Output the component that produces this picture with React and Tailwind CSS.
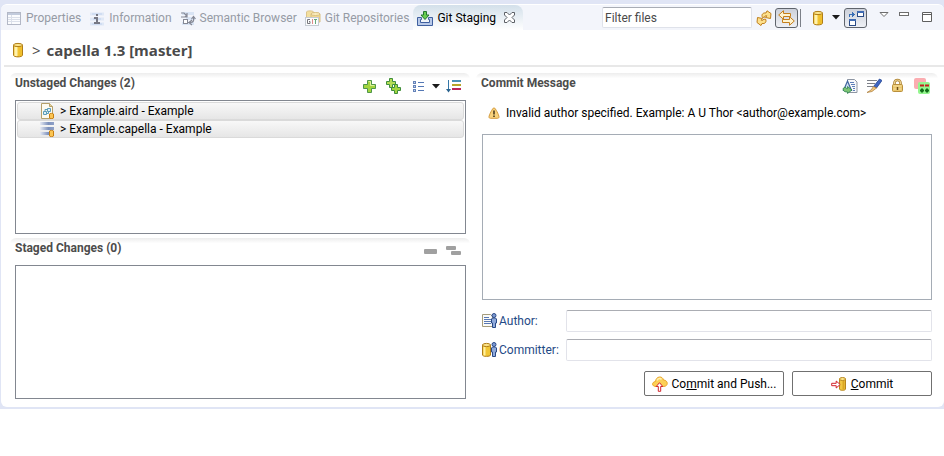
import React from "react";

const svgProps = { width: 16, height: 16, viewBox: "0 0 16 16", "aria-hidden": true, className: "block shrink-0" };

function PropertiesIcon() {
  return (
    <svg {...svgProps} shapeRendering="crispEdges">
      <rect x="1.5" y="2.5" width="13" height="12" fill="#fbfcfe" stroke="#b3b8c6" />
      <rect x="2" y="3" width="12" height="2" fill="#c2cbdc" />
      <path d="M2 7.5h12M2 9.5h12M2 11.5h12M5.5 5v9" stroke="#dbe0ea" fill="none" />
    </svg>
  );
}

function InformationIcon() {
  return (
    <svg {...svgProps}>
      <path d="M1 4h14M1 9h14M1 14h14" stroke="#dfe8f6" strokeWidth="3" />
      <path d="M3 4h10M4 9h8M3 14h10" stroke="#d0ddf2" strokeWidth="2" />
      <path d="M7 4h2v2H7zM5 7h4v5h2v2H5v-2h2V9H5z" fill="#777985" />
    </svg>
  );
}

function SemanticIcon() {
  return (
    <svg {...svgProps}>
      <path d="M2 3.500h12M6 8.500h9M2 13.500h12" stroke="#d9e4f4" strokeWidth="3" />
      <path d="M1 3h3l3 3M1 7h4l2-2M7 3v4H3" stroke="#868995" strokeWidth="1.200" fill="none" />
      <rect x="3.500" y="9.500" width="4" height="4" fill="#fff" stroke="#868995" />
      <path d="M8 12.500h2.500c3 0 3.500-2 3-5M11.500 9l2-2.500L15.500 9M12 10l-3 2.500 3 2.500" stroke="#868995" strokeWidth="1.200" fill="none" />
    </svg>
  );
}

function GitRepositoriesIcon() {
  return (
    <svg {...svgProps}>
      <path d="M1.500 2c0-1.500 7-1.500 7 0v7h-7z" fill="#f3df9f" stroke="#dcc48a" />
      <path d="M6 4c0-1.500 9-1.500 9 0v8H6z" fill="#f1d88c" stroke="#d9c083" />
      <ellipse cx="10.500" cy="4" rx="4.500" ry="1.500" fill="#faedbd" stroke="#d9c083" />
      <rect x=".5" y="7.500" width="13" height="8" fill="#fbfcfd" stroke="#c5cbd3" />
      <path d="M5 9.500H2.500v4H5v-2H4" stroke="#77777d" fill="none" />
      <path d="M7.500 9v5" stroke="#e08a8a" />
      <path d="M9 9.500h3M10.500 10v4" stroke="#65a97a" fill="none" />
    </svg>
  );
}

function GitStagingIcon() {
  return (
    <svg {...svgProps}>
      <path d="M.5 7.500h4v2h-1v3h9v-3h-1v-2h4v8H.5z" fill="#b8c9e8" stroke="#3f5f9f" />
      <path d="M6.500 1.500h3V5H12L8 9.500 4 5h2.500z" fill="#66cc4f" stroke="#23762f" />
    </svg>
  );
}

function CloseIcon() {
  return (
    <svg width="11" height="11" viewBox="0 0 11 11" aria-hidden="true" className="block">
      <path d="M.5.5h2.500l2.500 2.500L8 .5h2.500V3L8 5.500 10.500 8v2.500H8L5.500 8 3 10.500H.5V8L3 5.500.5 3z" fill="#fff" stroke="#5d6066" />
    </svg>
  );
}

function RefreshIcon() {
  return (
    <svg {...svgProps}>
      <path d="M6.500 7.500C5 4.500 7 2.500 10 3l1-2.200L15 3.500l-.5 5-5-1 1.300-1.700C9.500 5.200 8.800 6 9 7z" fill="#fde08c" stroke="#c07f1b" />
      <path d="M9.500 9c1.500 3-.5 5-3.500 4.500l-1 2L1 12.500l.5-5 5 1-1.300 1.700C6.500 10.800 7.200 10.500 7 9.500z" fill="#fde08c" stroke="#c07f1b" />
    </svg>
  );
}

function LinkSelectionIcon() {
  return (
    <svg width="17" height="16" viewBox="0 0 17 16" aria-hidden="true" className="block shrink-0">
      <path d="M.7 5 5.500.7v2.800h7v3h-7v2.800z" fill="#fff3cf" stroke="#c57f1c" />
      <path d="m16.300 11-4.800-4.300v2.800h-7v3h7v2.800z" fill="#fff3cf" stroke="#c57f1c" />
    </svg>
  );
}

function DatabaseIcon() {
  return (
    <svg {...svgProps}>
      <path d="M3.500 3v10c0 2.500 9 2.500 9 0V3z" fill="#f2c431" stroke="#b07d17" />
      <path d="M6 5v9" stroke="#fff2ae" strokeWidth="3" />
      <path d="M10.500 5v9" stroke="#efbd2b" strokeWidth="2" />
      <ellipse cx="8" cy="3" rx="4.500" ry="1.600" fill="#fce58a" stroke="#b07d17" />
    </svg>
  );
}

function HierarchyIcon() {
  return (
    <svg {...svgProps} shapeRendering="crispEdges">
      <path d="M1.500 7V4.500H5" stroke="#3a6fb5" fill="none" />
      <path d="M4 2h1v1h1v1h1v1H6v1H5v1H4z" fill="#3a6fb5" />
      <rect x="9.500" y="1.500" width="6" height="5" fill="#fff" stroke="#2b4b85" />
      <path d="M9 2h7" stroke="#3f6bb3" strokeWidth="2" />
      <rect x="1.500" y="9.500" width="6" height="6" fill="#fff" stroke="#2b4b85" />
      <path d="M1 10h7" stroke="#3f6bb3" strokeWidth="2" />
    </svg>
  );
}

function DropArrow() {
  return (
    <svg width="8" height="5" viewBox="0 0 8 5" aria-hidden="true" className="block shrink-0">
      <path d="M0 0h8L4 4.500z" fill="#1a1a1a" />
    </svg>
  );
}

function ViewMenuIcon() {
  return (
    <svg width="10" height="6" viewBox="0 0 10 6" aria-hidden="true" className="block">
      <path d="M1 .5h8l-4 4z" fill="#fff" stroke="#6d6d6d" />
    </svg>
  );
}

function MinimizeIcon() {
  return (
    <svg width="10" height="4" viewBox="0 0 10 4" aria-hidden="true" className="block">
      <rect x=".5" y=".5" width="9" height="3" fill="#fff" stroke="#6d6d6d" />
    </svg>
  );
}

function MaximizeIcon() {
  return (
    <svg width="10" height="10" viewBox="0 0 10 10" aria-hidden="true" className="block">
      <path d="M.5.5h9v9h-9zM.5 2.500h9" fill="#fff" stroke="#5f5f5f" />
    </svg>
  );
}

function PlusIcon() {
  return (
    <svg {...svgProps}>
      <path d="M5.500 2.500h4v4h4v4h-4v4h-4v-4h-4v-4h4z" fill="#a3d53f" stroke="#4f964a" />
      <path d="M6.500 3.500h2v4h4" stroke="#dff09a" fill="none" />
    </svg>
  );
}

function DoublePlusIcon() {
  return (
    <svg {...svgProps}>
      <path d="M4.500.5h3v3h3v3h-3v3h-3v-3h-3v-3h3z" fill="#b5dd55" stroke="#3f8e3c" />
      <path d="M9.500 6.500h3v3h3v3h-3v3h-3v-3h-3v-3h3z" fill="#a3d53f" stroke="#3f8e3c" />
    </svg>
  );
}

function PresentationIcon() {
  return (
    <svg {...svgProps} shapeRendering="crispEdges">
      <path d="M2.500 3.500h2v2h-2zM2.500 7.500h2v2h-2zM2.500 11.500h2v2h-2z" fill="#c5d5f0" stroke="#6683b8" />
      <path d="M7 4.500h6M7 8.500h6M7 12.500h6" stroke="#5478b5" />
    </svg>
  );
}

function SortIcon() {
  return (
    <svg {...svgProps}>
      <path d="M2.500 2v10" stroke="#3577a8" />
      <path d="M0 11h5l-2.500 3.500z" fill="#2c648f" />
      <path d="M6 3h9" stroke="#4b91b5" strokeWidth="2" />
      <path d="M6 7h9" stroke="#b8a528" strokeWidth="2" />
      <path d="M6 11h9" stroke="#ba2658" strokeWidth="2" />
    </svg>
  );
}

function MinusIcon() {
  return (
    <svg {...svgProps}>
      <rect x="1" y="6" width="13" height="5" rx="1" fill="#a0a0a0" />
    </svg>
  );
}

function DoubleMinusIcon() {
  return (
    <svg {...svgProps}>
      <rect x="0" y="3" width="10" height="4" rx="1" fill="#a0a0a0" />
      <rect x="5" y="8" width="10" height="4" rx="1" fill="#a0a0a0" />
    </svg>
  );
}

function AirdIcon() {
  return (
    <svg {...svgProps}>
      <path d="M1.500.5h8l3 3v12h-11z" fill="#fdfaf0" stroke="#b5a06a" />
      <path d="M9.500.5v3h3" fill="#e5d39c" stroke="#b5a06a" />
      <path d="M3.500 8.500h3v3h-3zM7.500 5.500h3v3h-3zM5 8V6.500h2M6.500 10.500h2v-2" fill="#dceff6" stroke="#5b9cb8" />
      <path d="M9.500 11v4c0 .8 4 .8 4 0v-4c0-.8-4-.8-4 0z" fill="#fbc552" stroke="#c77f12" />
    </svg>
  );
}

function CapellaIcon() {
  return (
    <svg {...svgProps}>
      <defs>
        <linearGradient id="capellaBar" x1="0" x2="1">
          <stop offset="0" stopColor="#e6eaf4" />
          <stop offset=".6" stopColor="#7d91bc" />
          <stop offset="1" stopColor="#8fa1c8" />
        </linearGradient>
      </defs>
      <rect x="0" y="1" width="14" height="3" fill="url(#capellaBar)" />
      <rect x="0" y="6" width="14" height="3" fill="url(#capellaBar)" />
      <rect x="0" y="11" width="14" height="3" fill="url(#capellaBar)" />
      <path d="M9.500 10v5c0 .8 4 .8 4 0v-5c0-.8-4-.8-4 0z" fill="#fbc552" stroke="#c77f12" />
    </svg>
  );
}

function WarningIcon() {
  return (
    <svg width="12" height="12" viewBox="0 0 12 12" aria-hidden="true" className="block shrink-0">
      <path d="M6 .8c1.500 0 5 7.700 5 9 0 1.200-.6 1.500-1.500 1.500h-7C1.600 11.300 1 11 1 9.800 1 8.500 4.500.8 6 .8z" fill="#f8d27c" stroke="#d49a3c" />
      <path d="M5.200 3.500h1.600V7.500H5.200zM5.200 8.500h1.600v1.600H5.200z" fill="#4a3a1c" />
    </svg>
  );
}

function AmendIcon() {
  return (
    <svg {...svgProps}>
      <path d="M5.500 1.500h7l2.500 2.500v10.500H5.500z" fill="#f8f9fb" stroke="#8e96a3" />
      <path d="M8 4.500h4M9 6.500h4M10 8.500h3M11 10.500h2M11 12.500h2" stroke="#5f7fb8" />
      <path d="M5.500 3 9.500 12.500h-8z" fill="#cfe0f3" stroke="#41659f" strokeWidth="1.200" />
      <path d="M1 10.500c0 3 2 3.500 4.500 3.500v1.500l4.500-3.500-4.500-3.500V10.500c-1.500 0-2-.5-2-1.500z" fill="#7cc474" stroke="#2d8250" strokeWidth=".8" />
    </svg>
  );
}

function SignedOffIcon() {
  return (
    <svg {...svgProps}>
      <path d="M1 2.500h10M1 5.500h8M1 8.500h6" stroke="#7d8189" />
      <path d="m13.500 1 2.500 1.500L10.500 10 7.500 8.500z" fill="#3f66c4" stroke="#234590" strokeWidth=".8" />
      <path d="m7.500 8.500 3 1.500L6 13.500l-5 1L5 12z" fill="#f3c77d" stroke="#a87a3a" strokeWidth=".7" />
    </svg>
  );
}

function LockIcon() {
  return (
    <svg {...svgProps}>
      <path d="M4.500 7.500V5c0-4 6-4 6 0v2.500" fill="none" stroke="#a67c2c" strokeWidth="2.600" />
      <path d="M4.500 7.500V5c0-4 6-4 6 0v2.500" fill="none" stroke="#edd391" strokeWidth="1.200" />
      <rect x="2.500" y="6.500" width="10" height="7" rx="1" fill="#eac66b" stroke="#b98f3c" />
      <path d="M3.500 8h8M3.500 11h8" stroke="#f6e0a0" />
      <path d="M7.500 9v3" stroke="#6e4e14" strokeWidth="1.500" />
    </svg>
  );
}

function GerritIcon() {
  return (
    <svg {...svgProps}>
      <rect x="0" y="0" width="12" height="11" rx="2" fill="#fbadb1" />
      <rect x="4" y="4" width="12" height="12" rx="2" fill="#94f68e" />
      <path d="M6 7.500h4M11 7.500h4" stroke="#c51c1c" strokeWidth="2" />
      <path d="M8 10.500v4M6 12.500h4M13 10.500v4M11 12.500h4" stroke="#116d18" strokeWidth="2" />
    </svg>
  );
}

function Person() {
  return (
    <g stroke="#2b4a86">
      <path d="M9.500 6c0-1.500 5-1.500 5 0v4h-1v4.500h-3V10h-1z" fill="#8fa9da" />
      <circle cx="12" cy="2.500" r="2" fill="#7d9ad3" />
    </g>
  );
}

function AuthorIcon() {
  return (
    <svg {...svgProps}>
      <path d="M.5 1.500h8l2 2v10H.5z" fill="#fbfbf8" stroke="#a59c7d" />
      <path d="M2 4.500h5M2 6.500h7M2 8.500h7M2 10.500h7" stroke="#5878b4" />
      <Person />
    </svg>
  );
}

function CommitterIcon() {
  return (
    <svg {...svgProps}>
      <path d="M.5 3v10c0 1.800 8 1.800 8 0V3z" fill="#f1c634" stroke="#b07d17" />
      <path d="M2.500 4.500v9" stroke="#fff0a0" strokeWidth="2" />
      <ellipse cx="4.500" cy="3" rx="4" ry="1.600" fill="#fce58a" stroke="#b07d17" />
      <Person />
    </svg>
  );
}

function PushIcon() {
  return (
    <svg {...svgProps}>
      <path d="M4 10.500C-.5 10.500-.5 6 3.500 5.500 4 0 10.500-.5 11.500 4c5 .3 5 6.500 0 6.500z" fill="#fcd056" stroke="#eaa62b" />
      <path d="M5 4.500c1-2.500 3.500-2.500 4.500-1" stroke="#fff0b0" strokeWidth="1.500" fill="none" />
      <path d="m7.500 6.700 3.300 3.800H8.700v4.800H6.300v-4.800H4.200z" fill="#fff" stroke="#d3222a" />
    </svg>
  );
}

function CommitIcon() {
  return (
    <svg {...svgProps}>
      <path d="M8.500 3v10c0 1.800 6 1.800 6 0V3z" fill="#f0c742" stroke="#b8861c" />
      <path d="M12.500 5v8.500" stroke="#dba625" strokeWidth="2" />
      <ellipse cx="11.500" cy="3" rx="3" ry="1.500" fill="#fce58a" stroke="#b8861c" />
      <path d="M.7 7.300h4.500V5l4 3.500-4 3.500V9.700H.7z" fill="#fff" stroke="#d3222a" />
    </svg>
  );
}

const tabs = [
  { label: "Properties", icon: PropertiesIcon },
  { label: "Information", icon: InformationIcon },
  { label: "Semantic Browser", icon: SemanticIcon },
  { label: "Git Repositories", icon: GitRepositoriesIcon },
];

function TabBar() {
  return (
    <div className="flex h-[26px] justify-between rounded-t-md border-t border-white bg-[#f3f5fb]">
      <div role="tablist" className="flex shrink-0 pl-px">
        {tabs.map(({ label, icon: Icon }) => (
          <button key={label} role="tab" aria-selected="false" className="flex items-center gap-1 px-1 whitespace-nowrap text-[#969ba5]">
            <Icon />
            {label}
          </button>
        ))}
        <div className="flex items-center rounded-t-lg bg-linear-to-b from-[#d3e0ea] to-white pr-2 pl-1">
          <button role="tab" aria-selected="true" className="flex items-center gap-1 whitespace-nowrap text-black">
            <GitStagingIcon />
            Git Staging
          </button>
          <button aria-label="Close Git Staging" className="ml-2">
            <CloseIcon />
          </button>
        </div>
      </div>
      <div className="flex shrink-0 items-center pr-3">
        <input
          aria-label="Filter files"
          placeholder="Filter files"
          className="h-[21px] w-[150px] rounded-xs border border-[#dfe2ea] border-t-[#a9adb5] bg-white px-[2px] placeholder:text-[#4a4a4a]"
        />
        <button aria-label="Refresh" className="ml-1"><RefreshIcon /></button>
        <button aria-label="Link with selection" aria-pressed="true" className="ml-[3px] flex h-5 w-[23px] items-center justify-center rounded-[3px] border border-[#5f646c] bg-linear-to-b from-[#cdd1da] to-[#eef0f5]">
          <LinkSelectionIcon />
        </button>
        <span className="ml-[2px] h-[18px] w-px bg-[#7c8088]" />
        <button aria-label="Select repository" className="ml-[9px]"><DatabaseIcon /></button>
        <button aria-label="Repository list" className="ml-[6px]"><DropArrow /></button>
        <button aria-label="Column layout" aria-pressed="true" className="ml-1 flex h-5 w-[23px] items-center justify-center rounded-[3px] border border-[#5f646c] bg-linear-to-b from-[#cdd1da] to-[#eef0f5]">
          <HierarchyIcon />
        </button>
        <div className="mb-1 flex h-4 items-start">
          <button aria-label="View menu" className="mt-1 ml-3"><ViewMenuIcon /></button>
          <button aria-label="Minimize" className="mt-1 ml-[10px]"><MinimizeIcon /></button>
          <button aria-label="Maximize" className="mt-1 ml-[13px]"><MaximizeIcon /></button>
        </div>
      </div>
    </div>
  );
}

function SectionHeader({ title, children }) {
  return (
    <div className="flex h-[27px] items-start justify-between rounded-t-md bg-linear-to-b from-[#ededed] to-white to-20% pr-2 pl-[5px]">
      <h2 className="font-bold text-[#4c4c4c]">{title}</h2>
      <div className="mt-[5px] flex items-center">{children}</div>
    </div>
  );
}

function FileRow({ icon: Icon, name }) {
  return (
    <li className="flex h-[18px] items-center gap-1 rounded-[3px] border border-[#dadada] bg-linear-to-b from-[#f8f8f8] to-[#e6e6e6] pl-[22px] whitespace-nowrap">
      <Icon />
      &gt; {name}
    </li>
  );
}

function PersonField({ id, label, icon: Icon }) {
  return (
    <div className="flex h-[22px] items-center">
      <label htmlFor={id} className="flex w-[84px] items-center gap-px whitespace-nowrap text-[#1f4a86]">
        <Icon />
        {label}
      </label>
      <input id={id} className="h-[22px] min-w-0 flex-1 rounded-xs border border-[#e2e3ea] border-t-[#abadb3] bg-white px-1" />
    </div>
  );
}

export default function App() {
  return (
    <main className="bg-[#e0e5f5] pt-1 pb-[2px] pl-px font-['Roboto','Noto_Sans',sans-serif] text-[12px] leading-[20px] text-black">
      <TabBar />
      <div className="rounded-b-md bg-white pb-2">
        <header className="flex h-[35px] items-center pt-1 pl-[9px]">
          <DatabaseIcon />
          <h1 className="ml-[6px] flex gap-[6px] font-['Open_Sans','Noto_Sans',sans-serif] text-[15px] font-bold whitespace-nowrap text-[#4a4a4a]">
            <span className="font-normal">&gt;</span>
            <span>capella 1.3 [master]</span>
          </h1>
        </header>
        <div className="ml-[3px] h-[2px] bg-[#e8e8e8]" />
        <div className="flex gap-[6px] pt-[6px] pr-[6px] pl-[9px]">
          <div className="min-w-0 flex-[230]">
            <section>
              <SectionHeader title="Unstaged Changes (2)">
                <div className="flex items-center">
                  <button aria-label="Add to index"><PlusIcon /></button>
                  <button aria-label="Add all to index" className="ml-[7px]"><DoublePlusIcon /></button>
                  <button aria-label="Presentation" className="ml-[10px]"><PresentationIcon /></button>
                  <button aria-label="Presentation menu" className="ml-[5px]"><DropArrow /></button>
                  <button aria-label="Sort" className="ml-[6px]"><SortIcon /></button>
                </div>
              </SectionHeader>
              <ul className="mr-1 ml-[5px] h-[134px] border border-[#828790] p-px">
                <FileRow icon={AirdIcon} name="Example.aird - Example" />
                <FileRow icon={CapellaIcon} name="Example.capella - Example" />
              </ul>
            </section>
            <section className="mt-1">
              <SectionHeader title="Staged Changes (0)">
                <button aria-label="Remove from index"><MinusIcon /></button>
                <button aria-label="Remove all from index" className="ml-[7px]"><DoubleMinusIcon /></button>
              </SectionHeader>
              <ul className="mr-1 ml-[5px] h-[134px] border border-[#828790]" />
            </section>
          </div>
          <section className="min-w-0 flex-[231]">
            <SectionHeader title="Commit Message">
              <div className="flex gap-2">
                <button aria-label="Amend previous commit"><AmendIcon /></button>
                <button aria-label="Add Signed-off-by"><SignedOffIcon /></button>
                <button aria-label="Sign commit"><LockIcon /></button>
                <button aria-label="Add Change-Id"><GerritIcon /></button>
              </div>
            </SectionHeader>
            <p className="mt-[3px] flex items-center gap-[6px] pl-3 whitespace-nowrap">
              <WarningIcon />
              Invalid author specified. Example: A U Thor &lt;author@example.com&gt;
            </p>
            <div className="mt-[11px] pr-[6px] pl-[6px]">
              <textarea aria-label="Commit message" className="block h-[166px] w-full resize-none border border-[#a5acb5] bg-white p-1" />
              <div className="mt-[10px] flex flex-col gap-[7px]">
                <PersonField id="author" label="Author:" icon={AuthorIcon} />
                <PersonField id="committer" label="Committer:" icon={CommitterIcon} />
              </div>
              <div className="mt-[10px] flex justify-end gap-2">
                <button className="flex h-[25px] w-[140px] items-center justify-center gap-1 rounded-xs border border-[#707070] bg-white whitespace-nowrap">
                  <PushIcon />
                  <span>Co<u>m</u>mit and Push...</span>
                </button>
                <button className="flex h-[25px] w-[140px] items-center justify-center gap-1 rounded-xs border border-[#707070] bg-white whitespace-nowrap">
                  <CommitIcon />
                  <span><u>C</u>ommit</span>
                </button>
              </div>
            </div>
          </section>
        </div>
      </div>
    </main>
  );
}
